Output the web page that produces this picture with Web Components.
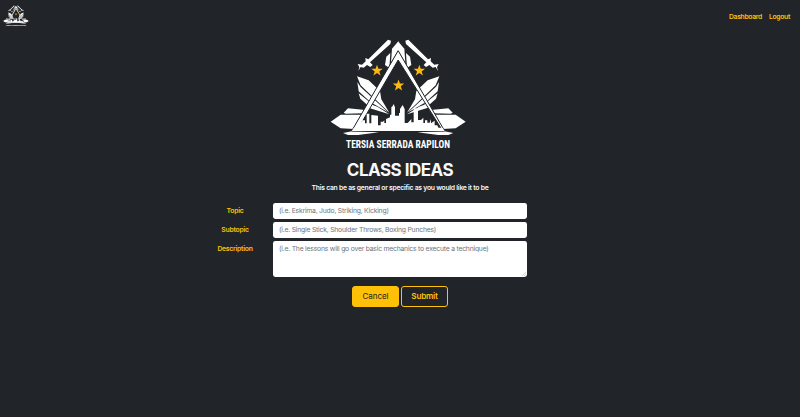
<!DOCTYPE html>
<html lang="en"><head><meta charset="utf-8"><title>Class Ideas</title>
<style>html,body{margin:0;height:100%;background:#212529}body{font-family:Inter,"Liberation Sans",sans-serif;color:#f8f9fa;overflow:hidden}</style></head>
<body>
<idea-page></idea-page>
<script>
const define=(name,html)=>customElements.define(name,class extends HTMLElement{
  constructor(){super();this.attachShadow({mode:'open'}).innerHTML=html(this)}
});
const star=(x,y)=>`<path transform="translate(${x} ${y}) scale(2.85)" fill="#fdb813" d="M0-6.3 1.5-2H6L2.4.8 3.8 5.2 0 2.5-3.8 5.2-2.4.8-6-2H-1.5Z"/>`;
const wing=`
<path d="M180 11 189 14 187 24 126 79 134 87 127 93 117 87 107 95 98 93 91 105 94 94 89 84 102 86 113 76 112 66 121 70Z"/>
<path d="M187 51 184 96 171 87 175 62Z"/>
<path d="M211 16V43L189 80 192 38Z"/>
<path d="M87 121 122 133 156 165 160 190 184 230 98 148Z"/>
<path d="M88 138 97 152 180 229 128 199 92 166Z"/>
<path d="M92 172 132 204 124 212 97 188Z"/>
<path d="M126 204 148 212 184 235 116 214Z"/>
<path d="M8 257 38 236 100 236 78 279 38 277Z"/>
<path d="M47 230 60 217 112 222 105 232 53 233Z"/>
<path d="M45 291 72 286 153 289 90 297 60 297Z"/>`;
define('crest-logo',()=>`<style>:host{display:block}svg{display:block;width:100%;height:100%;overflow:visible}text{font-family:"Liberation Sans Narrow","Roboto Condensed",Roboto,sans-serif;font-weight:700}</style>
<svg viewBox="6 6 411 342" fill="#fff" role="img" aria-label="Tersia Serrada Rapilon">
<g>${wing}</g><g transform="translate(421 0) scale(-1 1)">${wing}</g>
<path d="M210.5 44 71 285H350ZM210.5 72 340 278H90Z" fill-rule="evenodd" stroke="#212529" stroke-width="3"/>
<path d="M90 281V267L101 257V253H111V262H116V233H124V262H130V237L150 239V268H158V257H165L169 253V261H174V249L186 244V236H190V214L194 210 197 204 201 214V239H213V231H216V219L224 207 230 219V261H239L244 256 250 249V259H257V216L270 218V252H279L286 245V261H291V253H298V260H305L309 249V262L320 254V268H328L334 283Z"/>
<path d="M78 275H343L350 285H71Z"/>
${star(147,104)}${star(274,104)}${star(211.5,148.5)}
<text x="54" y="335.5" font-size="35" textLength="312" lengthAdjust="spacingAndGlyphs">TERSIA SERRADA RAPILON</text>
</svg>`);
define('nav-link',()=>`<style>:host{display:block;font-size:6.8px;line-height:10px;font-weight:600;letter-spacing:-.32px;color:#ffc107}</style><slot></slot>`);
define('top-bar',()=>`<style>:host{display:flex;height:33px;box-sizing:border-box;padding:5px 10px 0 3px;justify-content:space-between}crest-logo{width:26px;height:22px}nav{display:flex;gap:7px;padding-top:7px}</style>
<crest-logo></crest-logo><nav><nav-link>Dashboard</nav-link><nav-link>Logout</nav-link></nav>`);
define('form-row',e=>`<style>:host{display:grid;grid-template-columns:76px 254px;align-items:start}label{font-size:6.8px;line-height:16px;font-weight:600;letter-spacing:-.24px;color:#ffc107;text-align:center}
input,textarea{box-sizing:border-box;width:254px;height:16px;margin:0;border:0;border-radius:2.4px;background:#fff;padding:0 6px 1px;font:400 6.8px/10px Inter,"Liberation Sans",sans-serif;letter-spacing:-.21px;color:#212529;display:block}
textarea{height:36px;padding:3px 6px;resize:none}::placeholder{color:#6c757d;opacity:1}.area{position:relative}.area svg{position:absolute;right:1px;bottom:1px;width:4px;height:4px}</style>
<label><slot></slot></label>${e.hasAttribute('multiline')?`<div class="area"><textarea placeholder="${e.getAttribute('hint')}"></textarea><svg viewBox="0 0 4 4" stroke="#aaa" stroke-width=".5"><path d="M0 4 4 0M2 4 4 2"/></svg></div>`:`<input placeholder="${e.getAttribute('hint')}">`}`);
define('action-button',()=>`<style>:host{display:block}button{box-sizing:border-box;width:47px;height:21px;padding:0;border:1px solid #ffc107;border-radius:3px;background:transparent;color:#ffc107;font:600 8.1px/19px Inter,"Liberation Sans",sans-serif;letter-spacing:-.2px;display:block}:host([filled]) button{background:#ffc107;color:#212529;font-weight:400;letter-spacing:-.1px}</style><button><slot></slot></button>`);
define('idea-page',()=>`<style>:host{display:block}main{display:flex;flex-direction:column;align-items:center}.hero{width:137px;height:114px;margin:5px 4px 0 0}
h1{margin:7px 0 0;font-size:17px;line-height:22px;font-weight:700;letter-spacing:-.5px}p{margin:2px 0 0;font-size:6.8px;line-height:10px;font-weight:600;letter-spacing:-.25px}form{display:grid;gap:3px;margin:10px 0 0;width:330px;padding-right:76px}.actions{display:flex;gap:2px;margin:9px 0 0}</style>
<top-bar></top-bar><main><crest-logo class="hero"></crest-logo><h1>CLASS IDEAS</h1><p>This can be as general or specific as you would like it to be</p>
<form><form-row hint="(i.e. Eskrima, Judo, Striking, Kicking)">Topic</form-row><form-row hint="(i.e. Single Stick, Shoulder Throws, Boxing Punches)">Subtopic</form-row><form-row multiline hint="(i.e. The lessons will go over basic mechanics to execute a technique)">Description</form-row></form>
<div class="actions"><action-button filled>Cancel</action-button><action-button>Submit</action-button></div></main>`);
</script></body></html>
